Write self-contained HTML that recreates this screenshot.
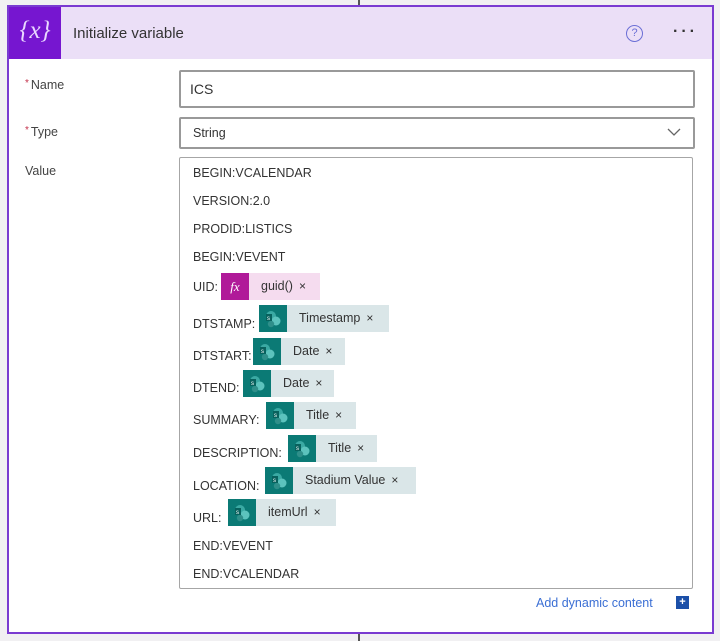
<!DOCTYPE html>
<html><head><meta charset="utf-8"><style>
body{margin:0;width:720px;height:641px;background:#f1f0f2;position:relative;overflow:hidden;font-family:"Liberation Sans",sans-serif;color:#333}
.a{position:absolute}
.card{left:7px;top:5px;width:703px;height:625px;border:2px solid #7a3bd1;background:#fff;box-sizing:content-box}
.hdr{left:0;top:0;width:703px;height:52px;background:#ebdff7}
.ico{left:0;top:0;width:52px;height:52px;background:#7616d0;color:#e9d8ff;font:italic 25px "Liberation Serif",serif;text-align:center;line-height:48px}
.lbl{font-size:12.5px;color:#444}
.star{color:#c4314b;font-size:10px;vertical-align:top;margin-right:2px}
.box{border:1px solid #a6a6a6;border-radius:2px;background:#fff}
.t{font-size:12.5px;color:#333;white-space:nowrap}
.tok{height:27px;background:#dae6e8;font-size:12.5px;line-height:27px;color:#333}
.ti{width:28px;height:27px;background:#0b7a75}
.x{font-size:12px;margin-left:6px}
</style></head><body>
<svg width="0" height="0" style="position:absolute"><defs><g id="sp"><circle cx="12" cy="11" r="5" fill="#3aa9a3"/><circle cx="17" cy="16" r="4.5" fill="#5cc3bd"/><circle cx="12" cy="19" r="3.2" fill="#2f8f8a"/><rect x="7" y="9" width="6" height="7" fill="#08625e"/><text x="8" y="15" font-size="6" fill="#fff" font-family="Liberation Sans">s</text></g></defs></svg>
<div class="a" style="left:358px;top:0;width:2px;height:6px;background:#555"></div>
<div class="a" style="left:358px;top:634px;width:2px;height:7px;background:#555"></div>
<div class="a card">
 <div class="a hdr"></div>
 <div class="a ico">{<i>x</i>}</div>
 <div class="a" style="left:64px;top:18px;font-size:15px;color:#333">Initialize variable</div>
 <div class="a" style="left:617px;top:18px;width:15px;height:15px;border:1.5px solid #6b6fd6;border-radius:50%;color:#6b6fd6;font-size:11px;text-align:center;line-height:15px">?</div>
 <div class="a" style="left:664px;top:16px;font-size:16px;letter-spacing:3px;color:#333;font-weight:bold">···</div>
</div>
<div class="a lbl" style="left:25px;top:78px"><span class="star">*</span>Name</div>
<div class="a lbl" style="left:25px;top:125px"><span class="star">*</span>Type</div>
<div class="a lbl" style="left:25px;top:164px">Value</div>
<div class="a box" style="left:179px;top:70px;width:512px;height:34px;border-width:2px;border-color:#999"></div>
<div class="a" style="left:190px;top:81px;font-size:14px">ICS</div>
<div class="a box" style="left:179px;top:117px;width:512px;height:28px;border-width:2px;border-color:#999"></div>
<div class="a t" style="left:193px;top:126px">String</div>
<svg class="a" style="left:667px;top:127px" width="14" height="10"><path d="M1 2 L7 8 L13 2" fill="none" stroke="#666" stroke-width="1.3"/></svg>
<div class="a box" style="left:179px;top:157px;width:512px;height:430px"></div>
<div class="a t" style="left:193px;top:166px">BEGIN:VCALENDAR</div>
<div class="a t" style="left:193px;top:194px">VERSION:2.0</div>
<div class="a t" style="left:193px;top:222px">PRODID:LISTICS</div>
<div class="a t" style="left:193px;top:250px">BEGIN:VEVENT</div>

<div class="a t" style="left:193px;top:280px">UID:</div>
<div class="a tok" style="left:221px;top:273px;width:99px;background:#f5dcef"><span class="a" style="left:0;top:0;width:28px;height:27px;line-height:27px;background:#b01a99;color:#fff;font:italic 13px/27px 'Liberation Serif',serif;text-align:center">fx</span><span class="a" style="left:40px;top:0">guid()<span class="x">×</span></span></div>

<div class="a t" style="left:193px;top:317px">DTSTAMP:</div>
<div class="a tok" style="left:259px;top:305px;width:130px"><svg class="a ti" viewBox="0 0 28 27"><rect width="28" height="27" fill="#0b7a75"/><use href="#sp"/></svg><span class="a" style="left:40px">Timestamp<span class="x">×</span></span></div>

<div class="a t" style="left:193px;top:349px">DTSTART:</div>
<div class="a tok" style="left:253px;top:338px;width:92px"><svg class="a ti" viewBox="0 0 28 27"><rect width="28" height="27" fill="#0b7a75"/><use href="#sp"/></svg><span class="a" style="left:40px">Date<span class="x">×</span></span></div>

<div class="a t" style="left:193px;top:381px">DTEND:</div>
<div class="a tok" style="left:243px;top:370px;width:91px"><svg class="a ti" viewBox="0 0 28 27"><rect width="28" height="27" fill="#0b7a75"/><use href="#sp"/></svg><span class="a" style="left:40px">Date<span class="x">×</span></span></div>

<div class="a t" style="left:193px;top:413px">SUMMARY:</div>
<div class="a tok" style="left:266px;top:402px;width:90px"><svg class="a ti" viewBox="0 0 28 27"><rect width="28" height="27" fill="#0b7a75"/><use href="#sp"/></svg><span class="a" style="left:40px">Title<span class="x">×</span></span></div>

<div class="a t" style="left:193px;top:446px">DESCRIPTION:</div>
<div class="a tok" style="left:288px;top:435px;width:89px"><svg class="a ti" viewBox="0 0 28 27"><rect width="28" height="27" fill="#0b7a75"/><use href="#sp"/></svg><span class="a" style="left:40px">Title<span class="x">×</span></span></div>

<div class="a t" style="left:193px;top:479px">LOCATION:</div>
<div class="a tok" style="left:265px;top:467px;width:151px"><svg class="a ti" viewBox="0 0 28 27"><rect width="28" height="27" fill="#0b7a75"/><use href="#sp"/></svg><span class="a" style="left:40px">Stadium Value<span class="x">×</span></span></div>

<div class="a t" style="left:193px;top:511px">URL:</div>
<div class="a tok" style="left:228px;top:499px;width:108px"><svg class="a ti" viewBox="0 0 28 27"><rect width="28" height="27" fill="#0b7a75"/><use href="#sp"/></svg><span class="a" style="left:40px">itemUrl<span class="x">×</span></span></div>

<div class="a t" style="left:193px;top:539px">END:VEVENT</div>
<div class="a t" style="left:193px;top:567px">END:VCALENDAR</div>

<div class="a" style="left:536px;top:596px;font-size:12.5px;color:#3b6fd4;width:135px;white-space:nowrap">Add dynamic content</div>
<div class="a" style="left:676px;top:596px;width:13px;height:13px;background:#1b4fa8;color:#fff;font-size:11px;line-height:13px;text-align:center;font-weight:bold">+</div>
</body></html>
